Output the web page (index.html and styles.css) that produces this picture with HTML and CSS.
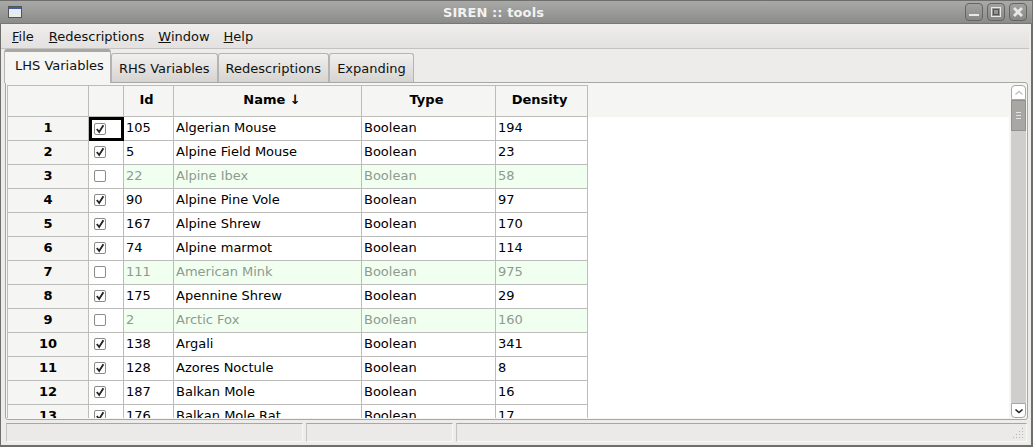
FILE: index.html
```html
<!DOCTYPE html>
<html lang="en">
<head>
    <meta charset="UTF-8">
    <title>SIREN :: tools</title>
    <link rel="stylesheet" href="styles.css">
</head>
<body>
<svg class="defs" width="0" height="0">
    <symbol id="tick" viewBox="0 0 10 10">
        <path d="M1.8 5 L4.2 8 L8.4 1.2" fill="none" stroke="#222" stroke-width="1.8"/>
    </symbol>
</svg>

<div class="window">
    <div class="titlebar">
        <svg class="appicon" width="14" height="12" viewBox="0 0 14 12">
            <rect x="0.5" y="0.5" width="13" height="11" fill="#e8ecf0" stroke="#555"/>
            <rect x="1" y="1" width="12" height="2" fill="#3a64a0"/>
        </svg>
        <div class="title">SIREN :: tools</div>
        <div class="winbuttons">
            <div class="winbtn"><svg width="16" height="16" viewBox="0 0 16 16"><rect x="3" y="10" width="10" height="2" fill="#e8e8e8"/></svg></div>
            <div class="winbtn"><svg width="16" height="16" viewBox="0 0 16 16"><rect x="3.5" y="3.5" width="9" height="9" fill="none" stroke="#e8e8e8"/><rect x="5.5" y="5.5" width="5" height="5" fill="none" stroke="#555"/></svg></div>
            <div class="winbtn"><svg width="16" height="16" viewBox="0 0 16 16"><path d="M4 4 L12 12 M12 4 L4 12" stroke="#e8e8e8" stroke-width="2.8"/></svg></div>
        </div>
    </div>

    <div class="menubar">
        <span class="menu"><u>F</u>ile</span>
        <span class="menu"><u>R</u>edescriptions</span>
        <span class="menu"><u>W</u>indow</span>
        <span class="menu"><u>H</u>elp</span>
    </div>

    <div class="tabs">
        <div class="tab active">LHS Variables</div>
        <div class="tab">RHS Variables</div>
        <div class="tab">Redescriptions</div>
        <div class="tab">Expanding</div>
    </div>

    <div class="panel">
        <div class="tablewrap">
            <table class="grid">
                <colgroup>
                    <col class="c-row"><col class="c-check"><col class="c-id"><col class="c-name"><col class="c-type"><col class="c-density">
                </colgroup>
                <thead>
                    <tr><th></th><th></th><th>Id</th><th class="sorted">Name ↓</th><th>Type</th><th>Density</th></tr>
                </thead>
                <tbody>
                    <tr><th>1</th><td class="check current"><span class="box"><svg><use href="#tick"/></svg></span></td><td>105</td><td>Algerian Mouse</td><td>Boolean</td><td>194</td></tr>
                    <tr><th>2</th><td class="check"><span class="box"><svg><use href="#tick"/></svg></span></td><td>5</td><td>Alpine Field Mouse</td><td>Boolean</td><td>23</td></tr>
                    <tr class="off"><th>3</th><td class="check"><span class="box"></span></td><td>22</td><td>Alpine Ibex</td><td>Boolean</td><td>58</td></tr>
                    <tr><th>4</th><td class="check"><span class="box"><svg><use href="#tick"/></svg></span></td><td>90</td><td>Alpine Pine Vole</td><td>Boolean</td><td>97</td></tr>
                    <tr><th>5</th><td class="check"><span class="box"><svg><use href="#tick"/></svg></span></td><td>167</td><td>Alpine Shrew</td><td>Boolean</td><td>170</td></tr>
                    <tr><th>6</th><td class="check"><span class="box"><svg><use href="#tick"/></svg></span></td><td>74</td><td>Alpine marmot</td><td>Boolean</td><td>114</td></tr>
                    <tr class="off"><th>7</th><td class="check"><span class="box"></span></td><td>111</td><td>American Mink</td><td>Boolean</td><td>975</td></tr>
                    <tr><th>8</th><td class="check"><span class="box"><svg><use href="#tick"/></svg></span></td><td>175</td><td>Apennine Shrew</td><td>Boolean</td><td>29</td></tr>
                    <tr class="off"><th>9</th><td class="check"><span class="box"></span></td><td>2</td><td>Arctic Fox</td><td>Boolean</td><td>160</td></tr>
                    <tr><th>10</th><td class="check"><span class="box"><svg><use href="#tick"/></svg></span></td><td>138</td><td>Argali</td><td>Boolean</td><td>341</td></tr>
                    <tr><th>11</th><td class="check"><span class="box"><svg><use href="#tick"/></svg></span></td><td>128</td><td>Azores Noctule</td><td>Boolean</td><td>8</td></tr>
                    <tr><th>12</th><td class="check"><span class="box"><svg><use href="#tick"/></svg></span></td><td>187</td><td>Balkan Mole</td><td>Boolean</td><td>16</td></tr>
                    <tr><th>13</th><td class="check"><span class="box"><svg><use href="#tick"/></svg></span></td><td>176</td><td>Balkan Mole Rat</td><td>Boolean</td><td>17</td></tr>
                </tbody>
            </table>
        </div>
        <div class="scrollbar">
            <div class="sbtn up"><svg width="14" height="14" viewBox="0 0 14 14"><path d="M3.5 8.5 L7 5.5 L10.5 8.5" fill="none" stroke="#c4c4c4" stroke-width="1.6"/></svg></div>
            <div class="thumb"><span></span><span></span><span></span></div>
            <div class="trough"></div>
            <div class="sbtn down"><svg width="14" height="14" viewBox="0 0 14 14"><path d="M3.5 5.5 L7 8.5 L10.5 5.5" fill="none" stroke="#222" stroke-width="1.6"/></svg></div>
        </div>
    </div>

    <div class="statusbar">
        <div class="cell s1"></div>
        <div class="cell s2"></div>
        <div class="cell s3">
            <svg class="grip" width="12" height="12" viewBox="0 0 12 12" fill="#b5b4b1">
                <rect x="9" y="0" width="1" height="1"/>
                <rect x="6" y="3" width="1" height="1"/><rect x="9" y="3" width="1" height="1"/>
                <rect x="3" y="6" width="1" height="1"/><rect x="6" y="6" width="1" height="1"/><rect x="9" y="6" width="1" height="1"/>
                <rect x="0" y="9" width="1" height="1"/><rect x="3" y="9" width="1" height="1"/><rect x="6" y="9" width="1" height="1"/><rect x="9" y="9" width="1" height="1"/>
            </svg>
        </div>
    </div>
</div>
</body>
</html>
```

FILE: styles.css
```css
html, body {
    margin: 0;
    padding: 0;
    height: 100%;
    overflow: hidden;
}
body {
    font-family: "DejaVu Sans", sans-serif;
    font-size: 13px;
    color: #000;
}
.defs {
    position: absolute;
}
.window {
    box-sizing: border-box;
    width: 1033px;
    height: 447px;
    display: flex;
    flex-direction: column;
    background-color: #edecea;
    border-left: 1px solid #6e6e6c;
    border-right: 2px solid #6e6e6c;
    border-bottom: 2px solid #6e6e6c;
}

/* title bar */
.titlebar {
    flex: none;
    height: 22px;
    display: flex;
    align-items: center;
    padding: 0 5px 0 7px;
    background: linear-gradient(#a9a9a7, #8b8b89);
    border-top: 1px solid #6e6e6c;
    border-bottom: 1px solid #77776f;
    margin: 0 -1px;
}
.appicon {
    flex: none;
    margin-left: 1px;
}
.title {
    flex: 1;
    text-align: center;
    font-weight: bold;
    color: #f2f2f2;
    letter-spacing: 0.1px;
}
.winbuttons {
    display: flex;
    gap: 4px;
}
.winbtn {
    box-sizing: border-box;
    width: 18px;
    height: 18px;
    display: flex;
    align-items: center;
    justify-content: center;
    border: 1px solid #66665f;
    border-radius: 4px;
    background: linear-gradient(#a2a2a0, #888886);
}

/* menu */
.menubar {
    flex: none;
    height: 24px;
    display: flex;
    align-items: center;
    padding-left: 11px;
    gap: 14px;
    background: linear-gradient(#efeeec, #e3e2e0);
    border-bottom: 1px solid #c4c3c0;
    margin-right: 2px;
}
.menu {
    color: #111;
}
.menu:first-child {
    margin-right: 1px;
}

/* tabs */
.tabs {
    flex: none;
    display: flex;
    align-items: flex-end;
    height: 33px;
    padding-left: 3px;
    position: relative;
    z-index: 1;
}
.tab {
    box-sizing: border-box;
    height: 29px;
    padding: 7px 7px 0 7px;
    border: 1px solid #b5b4b1;
    border-bottom: none;
    border-radius: 3px 3px 0 0;
    background: linear-gradient(#f1f0ee, #d5d4d1);
    color: #111;
}
.tab.active {
    height: 34px;
    width: 107px;
    padding: 6px 0 0 10px;
    background: #f5f5f3;
    border-top: 3px solid #a8a7a4;
    margin-bottom: -1px;
}

/* table panel */
.panel {
    flex: 1;
    min-height: 0;
    display: flex;
    margin: 0 3px 0 4px;
    padding: 2px 1px 1px 1px;
    background-color: #f5f5f3;
    border: 1px solid #a8a7a4;
    border-radius: 0 3px 3px 3px;
}
.tablewrap {
    flex: 1;
    min-width: 0;
    overflow: hidden;
    background: linear-gradient(#f5f5f3 32px, #fff 32px);
}
.grid {
    table-layout: fixed;
    width: 581px;
    border-collapse: separate;
    border-spacing: 0;
}
.c-row { width: 82px; }
.c-check { width: 35px; }
.c-id { width: 50px; }
.c-name { width: 188px; }
.c-type { width: 134px; }
.c-density { width: 92px; }
.grid th, .grid td {
    box-sizing: border-box;
    height: 24px;
    padding: 0 0 3px 2px;
    border-right: 1px solid #bcbcba;
    border-bottom: 1px solid #bcbcba;
    overflow: hidden;
    white-space: nowrap;
}
.grid thead th {
    height: 32px;
    padding: 0 4px 3px 0;
    text-align: center;
    background-color: #f5f5f3;
    border-top: 1px solid #bcbcba;
}
.grid thead th.sorted {
    padding: 0 0 3px 9px;
}
.grid thead th:first-child, .grid tbody th {
    border-left: 1px solid #bcbcba;
}
.grid tbody th {
    background-color: #f5f5f3;
    text-align: center;
    padding: 0 0 3px 0;
}
.grid td {
    background-color: #fff;
}
.off td {
    background-color: #f0fff0;
    color: #8f9a8f;
}
.off td.check {
    background-color: #fff;
}
.grid td.check {
    padding: 0 0 1px 5px;
    line-height: 0;
}
.grid td.current {
    border: 3px solid #000;
    padding: 0 0 0 2px;
}
.box {
    display: inline-block;
    box-sizing: border-box;
    width: 12px;
    height: 12px;
    border: 1px solid #8c8c8a;
    border-radius: 2px;
    background-color: #fff;
    vertical-align: middle;
}
.box svg {
    display: block;
    width: 10px;
    height: 10px;
}

/* scrollbar */
.scrollbar {
    flex: none;
    width: 15px;
    margin-left: 2px;
    display: flex;
    flex-direction: column;
    background-color: #f5f5f3;
}
.sbtn {
    box-sizing: border-box;
    flex: none;
    height: 15px;
    background-color: #fff;
    border: 1px solid #a8a7a4;
}
.sbtn svg {
    display: block;
}
.sbtn.up {
    border-radius: 4px 4px 0 0;
}
.sbtn.down {
    border-radius: 0 0 4px 4px;
}
.thumb {
    box-sizing: border-box;
    flex: none;
    height: 31px;
    display: flex;
    flex-direction: column;
    align-items: center;
    justify-content: center;
    gap: 2px;
    background-color: #a8a7a4;
    border: 1px solid #92918e;
}
.thumb span {
    width: 5px;
    height: 1px;
    background-color: #e4e3e1;
}
.trough {
    flex: 1;
    background-color: #cfcecc;
}

/* status bar */
.statusbar {
    flex: none;
    height: 25px;
    display: flex;
    gap: 3px;
    padding: 3px 4px 3px 5px;
    box-sizing: border-box;
}
.cell {
    box-sizing: border-box;
    position: relative;
    background-color: #ebeae8;
    border-top: 1px solid #a8a7a4;
    border-left: 1px solid #c4c3c0;
    border-right: 1px solid #f8f8f7;
    border-bottom: 1px solid #f8f8f7;
}
.s1 { width: 297px; }
.s2 { width: 147px; }
.s3 { flex: 1; }
.grip {
    position: absolute;
    right: 1px;
    bottom: 1px;
}
```
